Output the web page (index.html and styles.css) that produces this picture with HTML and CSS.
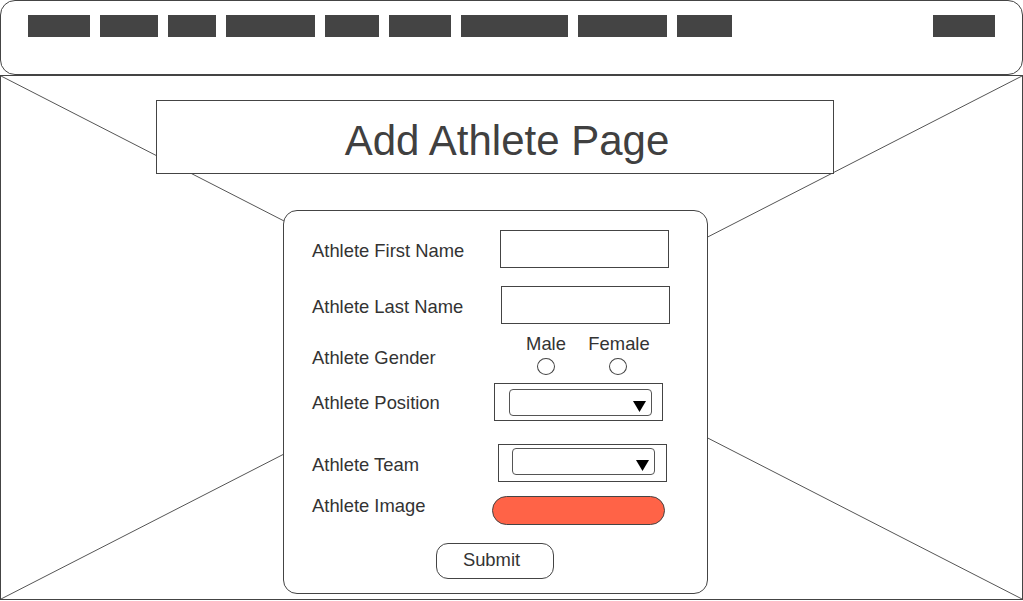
FILE: index.html
```html
<!DOCTYPE html>
<html lang="en">
<head>
<meta charset="utf-8">
<title>Add Athlete Page</title>
<link rel="stylesheet" href="styles.css">
</head>
<body>
<div class="page">
  <header class="nav">
    <span class="tab t1"></span>
    <span class="tab t2"></span>
    <span class="tab t3"></span>
    <span class="tab t4"></span>
    <span class="tab t5"></span>
    <span class="tab t6"></span>
    <span class="tab t7"></span>
    <span class="tab t8"></span>
    <span class="tab t9"></span>
    <span class="tab t10"></span>
  </header>
  <main class="canvas">
    <svg class="cross" viewBox="0 0 1021 523" preserveAspectRatio="none" aria-hidden="true">
      <line x1="0" y1="0" x2="1021" y2="523"/>
      <line x1="0" y1="523" x2="1021" y2="0"/>
    </svg>
    <div class="title-box"><h1 class="title">Add Athlete Page</h1></div>
    <form class="card">
      <div class="row r-first">
        <span class="lbl">Athlete First Name</span>
        <span class="text-input"></span>
      </div>
      <div class="row r-last">
        <span class="lbl">Athlete Last Name</span>
        <span class="text-input"></span>
      </div>
      <div class="row r-gender">
        <span class="lbl lbl-gender">Athlete Gender</span>
        <div class="radios">
          <div class="radio-col"><span class="radio-text">Male</span><span class="radio"></span></div>
          <div class="radio-col col-female"><span class="radio-text">Female</span><span class="radio"></span></div>
        </div>
      </div>
      <div class="row r-position">
        <span class="lbl">Athlete Position</span>
        <div class="select-box">
          <div class="select"><svg class="arrow" viewBox="0 0 13 11"><polygon points="0,0 13,0 6.5,11"/></svg></div>
        </div>
      </div>
      <div class="row r-team">
        <span class="lbl">Athlete Team</span>
        <div class="select-box">
          <div class="select"><svg class="arrow" viewBox="0 0 13 11"><polygon points="0,0 13,0 6.5,11"/></svg></div>
        </div>
      </div>
      <div class="row r-image">
        <span class="lbl">Athlete Image</span>
        <span class="image-btn"></span>
      </div>
      <div class="row r-submit">
        <span class="submit">Submit</span>
      </div>
    </form>
  </main>
</div>
</body>
</html>
```

FILE: styles.css
```css
* { box-sizing: border-box; }

body {
  margin: 0;
  background: #ffffff;
  font-family: "Liberation Sans", Arial, sans-serif;
  color: #333333;
}

.page {
  width: 1023px;
}

/* ---------- top navigation ---------- */
.nav {
  height: 75px;
  border: 1px solid #444444;
  border-radius: 15px;
  display: flex;
  align-items: flex-start;
  gap: 10px;
  padding: 14px 27px 0 27px;
}

.tab {
  height: 22px;
  background: #444444;
  flex: none;
}
.t1 { width: 62px; }
.t2 { width: 58px; }
.t3 { width: 48px; }
.t4 { width: 89px; }
.t5 { width: 54px; }
.t6 { width: 62px; }
.t7 { width: 107px; }
.t8 { width: 89px; }
.t9 { width: 55px; }
.t10 { width: 62px; margin-left: auto; }

/* ---------- canvas with placeholder cross ---------- */
.canvas {
  position: relative;
  height: 525px;
  border: 1px solid #444444;
  display: flex;
  flex-direction: column;
  align-items: flex-start;
}

.cross {
  position: absolute;
  inset: 0;
  width: 100%;
  height: 100%;
  z-index: 0;
}
.cross line {
  stroke: #555555;
  stroke-width: 1;
  vector-effect: non-scaling-stroke;
}

.title-box {
  position: relative;
  z-index: 1;
  margin: 24px 0 0 155px;
  width: 678px;
  height: 74px;
  border: 1px solid #444444;
  background: #ffffff;
  display: flex;
  align-items: center;
  justify-content: center;
  padding: 8px 0 0 24px;
}

.title {
  margin: 0;
  font-weight: normal;
  font-size: 42px;
  line-height: 48px;
  color: #404040;
}

/* ---------- form card ---------- */
.card {
  position: relative;
  z-index: 1;
  margin: 36px 0 0 282px;
  width: 425px;
  height: 384px;
  border: 1px solid #444444;
  border-radius: 14px;
  background: #ffffff;
  padding: 19px 0 0 28px;
  display: flex;
  flex-direction: column;
}

.row {
  display: flex;
  align-items: center;
}

.lbl {
  width: 180px;
  flex: none;
  font-size: 18.4px;
  line-height: 21px;
  padding-top: 2px;
  color: #333333;
}

.text-input {
  width: 169px;
  height: 38px;
  border: 1px solid #444444;
  background: #ffffff;
}

.r-first .text-input { margin-left: 8px; }
.r-last { margin-top: 18px; }
.r-last .text-input { margin-left: 9px; }

/* gender */
.r-gender { margin-top: 9px; }
.lbl-gender { padding-top: 6px; }
.radios {
  display: flex;
  gap: 13px;
  margin-left: 24px;
}
.radio-col {
  width: 60px;
  display: flex;
  flex-direction: column;
  align-items: center;
  gap: 4px;
}
.col-female .radio { margin-left: -2px; }
.radio-text {
  font-size: 18.4px;
  line-height: 21px;
  white-space: nowrap;
}
.radio {
  width: 18px;
  height: 17px;
  border: 1px solid #444444;
  border-radius: 50%;
}

/* selects */
.select-box {
  width: 169px;
  height: 38px;
  border: 1px solid #444444;
  display: flex;
  align-items: flex-start;
}
.select {
  width: 143px;
  height: 27px;
  border: 1px solid #555555;
  border-radius: 4px;
  display: flex;
  justify-content: flex-end;
  align-items: flex-end;
  padding: 0 5px 3px 0;
}
.arrow {
  width: 13px;
  height: 11px;
  display: block;
}
.arrow polygon { fill: #000000; }

.r-position { margin-top: 8px; }
.r-position .lbl { padding-top: 0; }
.r-position .select-box { margin-left: 2px; padding: 5px 0 0 14px; }
.r-team { margin-top: 23px; }
.r-team .select-box { margin-left: 6px; padding: 3px 0 0 13px; }

/* image */
.r-image {
  margin-top: 14px;
  align-items: flex-start;
}
.r-image .lbl { padding-top: 0; margin-top: -1px; }
.image-btn {
  width: 173px;
  height: 29px;
  border: 1px solid #444444;
  border-radius: 15px;
  background: #ff6347;
}

/* submit */
.r-submit { margin-top: 18px; }
.submit {
  margin-left: 124px;
  width: 118px;
  height: 36px;
  border: 1px solid #444444;
  border-radius: 12px;
  background: #ffffff;
  display: flex;
  align-items: center;
  justify-content: center;
  padding: 0 7px 3px 0;
  font-size: 18.4px;
  line-height: 21px;
  color: #333333;
}
```
